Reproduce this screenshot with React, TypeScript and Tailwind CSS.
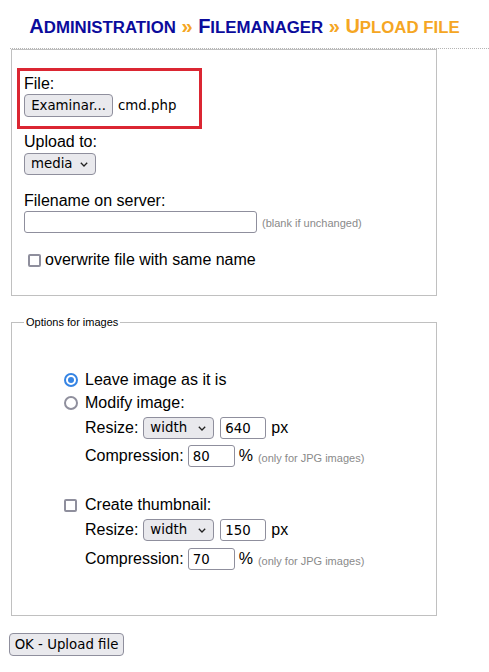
import React from "react";

const ctrl = "font-['DejaVu_Sans',sans-serif] text-[13.333px] text-black";

function FxButton({ children, className = "" }: any) {
  return (
    <button
      type="button"
      className={`${ctrl} h-[23px] flex items-center justify-center rounded-[4px] border border-[#8f8f9d] bg-[#e9e9ed] leading-none ${className}`}
    >
      {children}
    </button>
  );
}

function FxSelect({ value, className = "" }: any) {
  return (
    <button
      type="button"
      className={`${ctrl} h-[22px] flex items-center justify-between pl-[6px] pr-[7px] rounded-[4px] border border-[#8f8f9d] bg-[#e9e9ed] leading-none ${className}`}
    >
      <span>{value}</span>
      <svg width="8" height="5" viewBox="0 0 8 5" fill="none">
        <polyline points="0.8,0.8 4,4 7.2,0.8" stroke="#222" strokeWidth="1.3" />
      </svg>
    </button>
  );
}

function FxInput({ value = "", className = "" }: any) {
  return (
    <input
      type="text"
      defaultValue={value}
      className={`${ctrl} h-[22px] pl-[4px] rounded-[3px] border border-[#8f8f9d] bg-white outline-none ${className}`}
    />
  );
}

function FxCheckbox({ className = "" }: any) {
  return (
    <div
      className={`w-[13px] h-[13px] shrink-0 rounded-[2px] border-2 border-[#8f8f9d] bg-white ${className}`}
    />
  );
}

function FxRadio({ checked }: { checked?: boolean }) {
  return checked ? (
    <div className="mt-[2px] w-[14px] h-[14px] shrink-0 rounded-full border-2 border-[#3584e4] bg-white flex items-center justify-center">
      <div className="w-[6px] h-[6px] rounded-full bg-[#3584e4]" />
    </div>
  ) : (
    <div className="mt-[2px] w-[14px] h-[14px] shrink-0 rounded-full border-2 border-[#8f8f9d] bg-white" />
  );
}

function Note({ children, className = "" }: any) {
  return <span className={`text-[11px] text-[#8a8a8a] ${className}`}>{children}</span>;
}

// small caps as in the original title: big initial, smaller capitals after it
function Caps({ big, rest }: { big: string; rest: string }) {
  return (
    <>
      <span className="text-[20px]">{big}</span>
      <span className="text-[16.8px]">{rest}</span>
    </>
  );
}

function ResizeRow({ size, className = "" }: any) {
  return (
    <div className={`flex items-center h-[22px] ml-[61px] ${className}`}>
      <span>Resize:</span>
      <FxSelect value="width" className="ml-[5px] w-[71px]" />
      <FxInput value={size} className="ml-[6px] w-[46px]" />
      <span className="ml-[5px]">px</span>
    </div>
  );
}

function CompressionRow({ quality, className = "" }: any) {
  return (
    <div className={`flex items-center h-[22px] ml-[61px] ${className}`}>
      <span>Compression:</span>
      <FxInput value={quality} className="ml-[4px] w-[47px]" />
      <span className="ml-[4px]">%</span>
      <Note className="ml-[5px] mt-[3px]">(only for JPG images)</Note>
    </div>
  );
}

export default function App() {
  return (
    <div className="relative w-[489px] h-[672px] overflow-hidden bg-white text-black font-['Liberation_Sans',Arial,sans-serif] text-[16px] leading-[18px]">
      {/* page title */}
      <div className="ml-[10px] pr-[10px] h-[49px] pt-[14px] border-b border-dotted border-[#b4b4b4] text-center text-[20px] leading-[24px] font-bold">
        <span className="text-[#0b0b9c]">
          <Caps big="A" rest="DMINISTRATION" />
        </span>
        <span className="text-[#f5a623]"> » </span>
        <span className="text-[#0b0b9c]">
          <Caps big="F" rest="ILEMANAGER" />
        </span>
        <span className="text-[#f5a623]">
          {" » "}
          <Caps big="U" rest="PLOAD FILE" />
        </span>
      </div>

      <fieldset className="ml-[11px] w-[426px] h-[247px] border border-[#c0c0c0] px-[12px] pt-[25px]">
        <div>File:</div>
        <div className="mt-[1px] flex items-center h-[23px]">
          <FxButton className="w-[89px]">Examinar...</FxButton>
          <span className={`${ctrl} ml-[5px]`}>cmd.php</span>
        </div>

        <div className="mt-[16px]">Upload to:</div>
        <FxSelect value="media" className="mt-[2px] w-[72px]" />

        <div className="mt-[17px]">Filename on server:</div>
        <div className="mt-[1px] flex items-center">
          <FxInput className="w-[233px]" />
          <Note className="ml-[5px] mt-[2px]">(blank if unchanged)</Note>
        </div>

        <div className="mt-[18px] h-[18px] flex items-start">
          <FxCheckbox className="ml-[4px] mt-[3px]" />
          <span className="ml-[4px]">overwrite file with same name</span>
        </div>
      </fieldset>

      <fieldset className="mt-[20px] ml-[11px] w-[426px] h-[300px] border border-[#c0c0c0] px-[12px]">
        <legend className="px-[2px] text-[11px] leading-[13px]">Options for images</legend>

        <div className="mt-[42px] ml-[40px] h-[18px] flex items-start">
          <FxRadio checked />
          <span className="ml-[7px]">Leave image as it is</span>
        </div>
        <div className="mt-[5px] ml-[40px] h-[18px] flex items-start">
          <FxRadio />
          <span className="ml-[7px]">Modify image:</span>
        </div>
        <ResizeRow size="640" className="mt-[5px]" />
        <CompressionRow quality="80" className="mt-[6px]" />

        <div className="mt-[29px] ml-[40px] h-[18px] flex items-start">
          <FxCheckbox className="mt-[3px]" />
          <span className="ml-[8px]">Create thumbnail:</span>
        </div>
        <ResizeRow size="150" className="mt-[5px]" />
        <CompressionRow quality="70" className="mt-[7px]" />
      </fieldset>

      <FxButton className="mt-[17px] ml-[9px] w-[115px]">OK - Upload file</FxButton>

      {/* red highlight drawn over the file field */}
      <div className="absolute left-[17px] top-[68px] w-[185px] h-[61px] border-[3px] border-[#db2632]" />
    </div>
  );
}
